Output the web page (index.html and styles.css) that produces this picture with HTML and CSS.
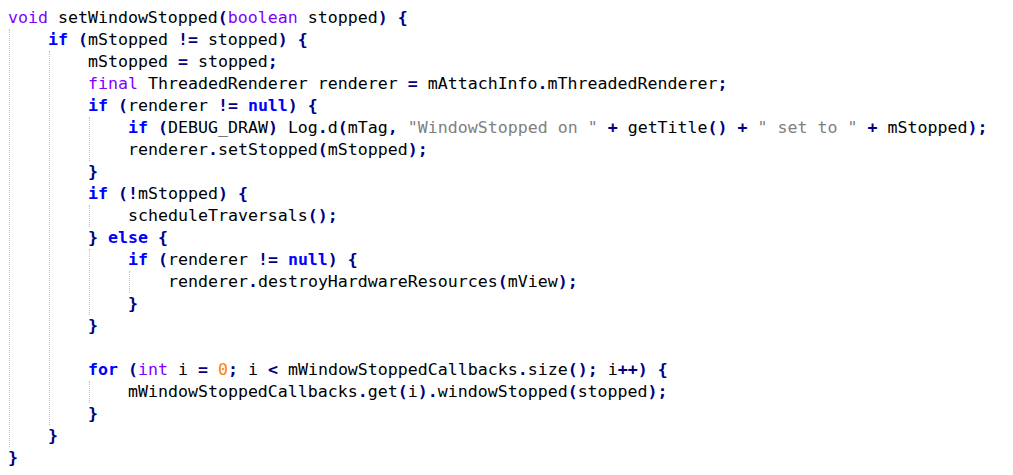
FILE: index.html
```html
<!DOCTYPE html>
<html>
<head>
<meta charset="utf-8">
<link rel="stylesheet" href="styles.css">
</head>
<body>
<div class="code">
  <div class="line"><span class="k">void</span> setWindowStopped<span class="p">(</span><span class="k">boolean</span> stopped<span class="p">)</span> <span class="p">{</span></div>
  <div class="block">
    <div class="line"><span class="b">if</span> <span class="p">(</span>mStopped <span class="p">!=</span> stopped<span class="p">)</span> <span class="p">{</span></div>
    <div class="block">
      <div class="line">mStopped <span class="p">=</span> stopped<span class="p">;</span></div>
      <div class="line"><span class="k">final</span> ThreadedRenderer renderer <span class="p">=</span> mAttachInfo<span class="p">.</span>mThreadedRenderer<span class="p">;</span></div>
      <div class="line"><span class="b">if</span> <span class="p">(</span>renderer <span class="p">!=</span> <span class="b">null</span><span class="p">)</span> <span class="p">{</span></div>
      <div class="block">
        <div class="line"><span class="b">if</span> <span class="p">(</span>DEBUG_DRAW<span class="p">)</span> Log<span class="p">.</span>d<span class="p">(</span>mTag<span class="p">,</span> <span class="s">"WindowStopped on "</span> <span class="p">+</span> getTitle<span class="p">()</span> <span class="p">+</span> <span class="s">" set to "</span> <span class="p">+</span> mStopped<span class="p">);</span></div>
        <div class="line">renderer<span class="p">.</span>setStopped<span class="p">(</span>mStopped<span class="p">);</span></div>
      </div>
      <div class="line"><span class="p">}</span></div>
      <div class="line"><span class="b">if</span> <span class="p">(!</span>mStopped<span class="p">)</span> <span class="p">{</span></div>
      <div class="block">
        <div class="line">scheduleTraversals<span class="p">();</span></div>
      </div>
      <div class="line"><span class="p">}</span> <span class="b">else</span> <span class="p">{</span></div>
      <div class="block">
        <div class="line"><span class="b">if</span> <span class="p">(</span>renderer <span class="p">!=</span> <span class="b">null</span><span class="p">)</span> <span class="p">{</span></div>
        <div class="block">
          <div class="line">renderer<span class="p">.</span>destroyHardwareResources<span class="p">(</span>mView<span class="p">);</span></div>
        </div>
        <div class="line"><span class="p">}</span></div>
      </div>
      <div class="line"><span class="p">}</span></div>
      <div class="line"> </div>
      <div class="line"><span class="b">for</span> <span class="p">(</span><span class="k">int</span> i <span class="p">=</span> <span class="n">0</span><span class="p">;</span> i <span class="p">&lt;</span> mWindowStoppedCallbacks<span class="p">.</span>size<span class="p">();</span> i<span class="p">++)</span> <span class="p">{</span></div>
      <div class="block">
        <div class="line">mWindowStoppedCallbacks<span class="p">.</span>get<span class="p">(</span>i<span class="p">).</span>windowStopped<span class="p">(</span>stopped<span class="p">);</span></div>
      </div>
      <div class="line"><span class="p">}</span></div>
    </div>
    <div class="line"><span class="p">}</span></div>
  </div>
  <div class="line"><span class="p">}</span></div>
</div>
</body>
</html>
```

FILE: styles.css
```css
html, body {
  margin: 0;
  padding: 0;
  background: #ffffff;
}

.code {
  padding: 7px 0 0 8px;
  font-family: "DejaVu Sans Mono", "Liberation Mono", monospace;
  font-size: 16.6px;
  line-height: 22px;
  color: #000000;
}

.line {
  height: 22px;
  white-space: pre;
}

.block {
  margin-left: 1px;
  border-left: 1px dotted #c0c0c0;
  padding-left: 38px;
}

.k {
  color: #8000ff;
}

.b {
  color: #0000ff;
  font-weight: bold;
}

.p {
  color: #000080;
  font-weight: bold;
}

.s {
  color: #808080;
}

.n {
  color: #ff8000;
}
```
